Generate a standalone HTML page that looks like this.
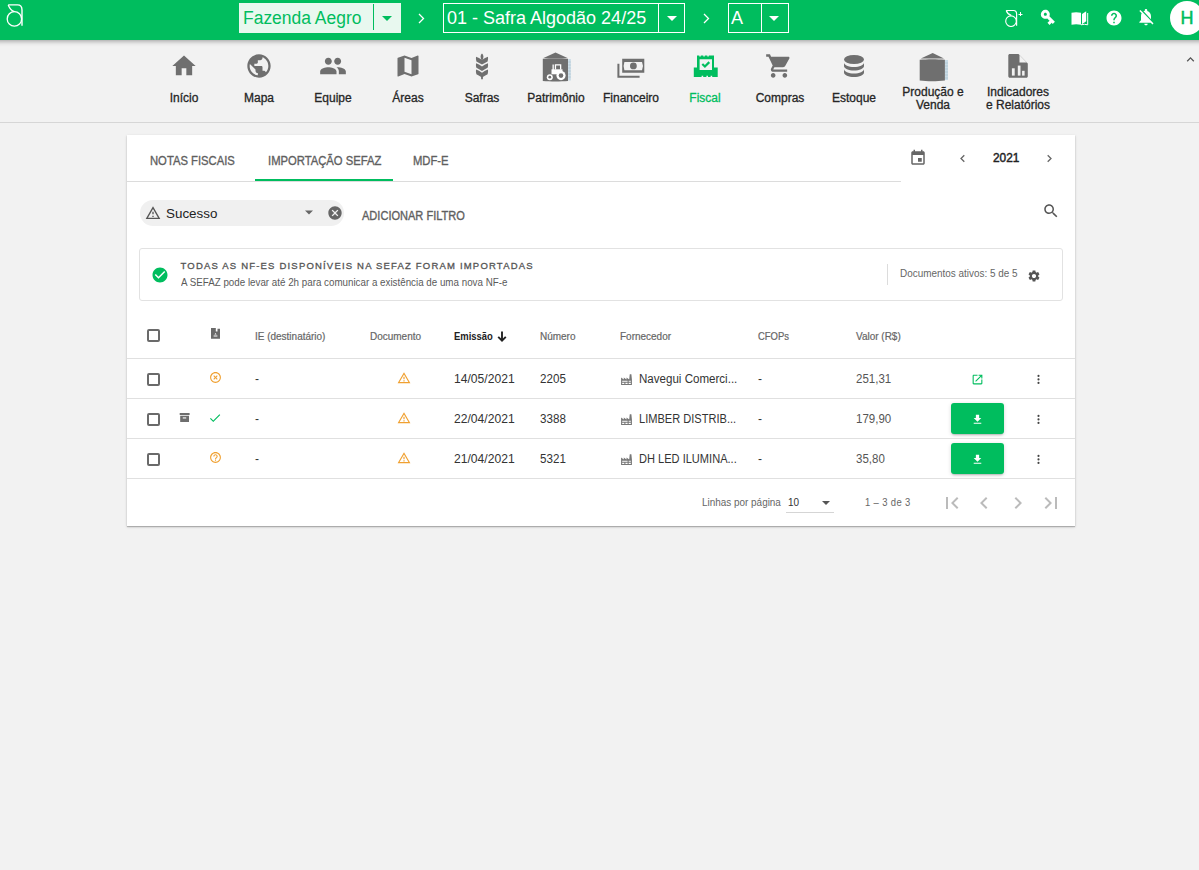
<!DOCTYPE html>
<html><head><meta charset="utf-8">
<style>
*{box-sizing:border-box;margin:0;padding:0}
html,body{width:1199px;height:870px;overflow:hidden;background:#f2f2f2;font-family:"Liberation Sans",sans-serif;color:#333}
.abs{position:absolute}
svg{display:block}
#top{position:absolute;left:0;top:0;width:1199px;height:40px;background:#00bd5e;z-index:5}
#topsh{position:absolute;left:-20px;top:0;width:1240px;height:40px;box-shadow:0 1px 5px rgba(0,0,0,.38);z-index:4}
#nav{position:absolute;left:0;top:40px;width:1199px;height:83px;border-bottom:1px solid #d6d6d6}
.ni{position:absolute;text-align:center;font-size:12px;color:#262626;-webkit-text-stroke:0.3px #262626;white-space:nowrap}
#card{position:absolute;left:127px;top:135px;width:948px;height:391px;background:#fff;box-shadow:0 1px 1px rgba(0,0,0,.22),0 1px 3px rgba(0,0,0,.14)}
.t{position:absolute;white-space:nowrap;line-height:1}
</style></head><body>
<div id="topsh"></div><div id="top">
<svg class="abs" style="left:0;top:0" width="30" height="40" viewBox="0 0 30 40">
<circle cx="14.4" cy="18.9" r="7.2" fill="none" stroke="#fff" stroke-width="1.3"/>
<path d="M8.2 4.9 H17.5 C20.5 4.9 22 7 22 10 V25.8" fill="none" stroke="#fff" stroke-width="1.4"/>
<path d="M8.2 4.9 C9.5 8 11.5 10.8 14.4 11.6" fill="none" stroke="#fff" stroke-width="1.3"/>
</svg>
<div class="abs" style="left:239px;top:3px;width:162px;height:30px;background:#e8f8ef"></div>
<div class="t" style="left:242.5px;top:6px;font-size:18px;color:#00bd5e;line-height:24px;transform:scaleX(0.97);transform-origin:0 0">Fazenda Aegro</div>
<div class="abs" style="left:373px;top:4px;width:1px;height:26px;background:#00bd5e"></div>
<svg class="abs" style="left:375px;top:6px" width="24" height="24" viewBox="0 0 24 24"><path d="M7 10l5 5 5-5z" fill="#00bd5e"/></svg>
<svg class="abs" style="left:412px;top:6px" width="18" height="24" viewBox="0 0 18 24"><path d="M7 8l4.5 4.5L7 17" fill="none" stroke="#fff" stroke-width="1.3"/></svg>
<div class="abs" style="left:443px;top:3px;width:242px;height:30px;border:1px solid #fff"></div>
<div class="t" style="left:447px;top:6px;font-size:18px;color:#fff;line-height:24px">01 - Safra Algodão 24/25</div>
<div class="abs" style="left:658px;top:4px;width:1px;height:28px;background:#fff"></div>
<svg class="abs" style="left:660px;top:6px" width="24" height="24" viewBox="0 0 24 24"><path d="M7 10l5 5 5-5z" fill="#fff"/></svg>
<svg class="abs" style="left:697px;top:6px" width="18" height="24" viewBox="0 0 18 24"><path d="M7 8l4.5 4.5L7 17" fill="none" stroke="#fff" stroke-width="1.3"/></svg>
<div class="abs" style="left:728px;top:3px;width:61px;height:30px;border:1px solid #fff"></div>
<div class="t" style="left:731px;top:6px;font-size:18px;color:#fff;line-height:24px">A</div>
<div class="abs" style="left:761px;top:4px;width:1px;height:28px;background:#fff"></div>
<svg class="abs" style="left:762px;top:6px" width="24" height="24" viewBox="0 0 24 24"><path d="M7 10l5 5 5-5z" fill="#fff"/></svg>
<!-- right icons -->
<svg class="abs" style="left:1003px;top:9px" width="22" height="18" viewBox="0 0 22 18">
<circle cx="8" cy="12.2" r="5.3" fill="none" stroke="#fff" stroke-width="1.1"/>
<path d="M3.2 1.5 H10.5 C12.5 1.5 13.6 3 13.6 5 V16.8" fill="none" stroke="#fff" stroke-width="1.2"/>
<path d="M3.2 1.5 C4 3.6 5.5 5.6 8.2 6.4" fill="none" stroke="#fff" stroke-width="1.2"/>
<path d="M17.5 3 v4 M15.5 5.5 h4" stroke="#fff" stroke-width="1"/>
</svg>
<svg class="abs" style="left:1038.5px;top:8px" width="18" height="18" viewBox="0 0 24 24"><g transform="rotate(45 12 12)"><path d="M7 14c-1.1 0-2-.9-2-2s.9-2 2-2 2 .9 2 2-.9 2-2 2zm5.65-4C11.83 7.67 9.61 6 7 6c-3.31 0-6 2.69-6 6s2.69 6 6 6c2.61 0 4.83-1.67 5.65-4H17v4h4v-4h2v-4H12.65z" fill="#fff"/></g></svg>
<svg class="abs" style="left:1070px;top:10px" width="20" height="16" viewBox="0 0 20 16"><path d="M1.5 2.8 Q6 1.6 11 2.8 V14.8 Q6 13.6 1.5 14.8Z" fill="#fff"/><path d="M11 14.8 Q14.5 13.8 17.7 14.8 V3" fill="none" stroke="#fff" stroke-width="1"/><path d="M12 14.2 V4 L16.2 1.2 V11.2Z" fill="#fff"/></svg>
<svg class="abs" style="left:1104.5px;top:8.8px" width="18" height="18" viewBox="0 0 24 24"><path d="M12 2C6.48 2 2 6.48 2 12s4.480 10 10 10 10-4.48 10-10S17.52 2 12 2zm1 17h-2v-2h2v2zm2.07-7.75l-.9.92C13.45 12.9 13 13.5 13 15h-2v-.5c0-1.1.45-2.1 1.17-2.83l1.24-1.26c.37-.36.59-.86.59-1.41 0-1.1-.9-2-2-2s-2 .9-2 2H8c0-2.210 1.79-4 4-4s4 1.79 4 4c0 .88-.36 1.68-.93 2.25z" fill="#fff"/></svg>
<svg class="abs" style="left:1136px;top:7px" width="20" height="20" viewBox="0 0 24 24"><path d="M20 18.69L7.84 6.14 5.27 3.49 4 4.76l2.8 2.8v.01c-.52.99-.8 2.16-.8 3.42v5l-2 2v1h13.73l2 2L21 19.72l-1-1.03zM12 22c1.11 0 2-.89 2-2h-4c0 1.11.89 2 2 2zm6-7.32V11c0-3.08-1.64-5.64-4.5-6.32V4c0-.83-.67-1.5-1.5-1.5s-1.5.67-1.5 1.5v.68c-.15.03-.29.08-.42.12-.1.03-.2.07-.3.11h-.01c-.01 0-.01 0-.02.01-.23.09-.46.2-.68.31 0 0-.01 0-.01.01L18 14.68z" fill="#fff"/></svg>
<div class="abs" style="left:1170px;top:1px;width:34px;height:34px;border-radius:50%;background:#fff"></div>
<div class="t" style="left:1180.5px;top:6.5px;font-size:18px;color:#00bd5e;line-height:22px;-webkit-text-stroke:0.5px #00bd5e">H</div>
</div>
<div id="nav"><div class="ni" style="left:124px;width:120px;top:52px;line-height:13px;">Início</div><svg class="abs" style="left:170px;top:11.5px" width="28" height="28" viewBox="0 0 24 24"><path d="M10 20v-6h4v6h5v-8h3L12 3 2 12h3v8z" fill="#6f6f6f"/></svg><div class="ni" style="left:199px;width:120px;top:52px;line-height:13px;">Mapa</div><svg class="abs" style="left:245px;top:12px" width="28" height="28" viewBox="0 0 24 24"><path d="M12 2C6.48 2 2 6.48 2 12s4.48 10 10 10 10-4.48 10-10S17.52 2 12 2zm-1 17.93c-3.95-.49-7-3.85-7-7.93 0-.62.08-1.21.21-1.79L9 15v1c0 1.1.9 2 2 2v1.93zm6.9-2.54c-.26-.81-1-1.39-1.9-1.39h-1v-3c0-.55-.45-1-1-1H8v-2h2c.55 0 1-.45 1-1V7h2c1.1 0 2-.9 2-2v-.41c2.93 1.19 5 4.06 5 7.41 0 2.08-.8 3.97-2.1 5.39z" fill="#6f6f6f"/></svg><div class="ni" style="left:273px;width:120px;top:52px;line-height:13px;">Equipe</div><svg class="abs" style="left:319px;top:11.5px" width="28" height="28" viewBox="0 0 24 24"><path d="M16 11c1.66 0 2.99-1.34 2.99-3S17.66 5 16 5c-1.66 0-3 1.34-3 3s1.34 3 3 3zm-8 0c1.66 0 2.99-1.34 2.99-3S9.66 5 8 5C6.34 5 5 6.34 5 8s1.34 3 3 3zm0 2c-2.33 0-7 1.17-7 3.5V19h14v-2.5c0-2.33-4.67-3.5-7-3.5zm8 0c-.29 0-.62.02-.97.05 1.16.84 1.97 1.97 1.97 3.45V19h6v-2.5c0-2.33-4.67-3.5-7-3.5z" fill="#6f6f6f"/></svg><div class="ni" style="left:348px;width:120px;top:52px;line-height:13px;">Áreas</div><svg class="abs" style="left:393.7px;top:11.8px" width="28" height="28" viewBox="0 0 24 24"><path d="M20.5 3l-.16.03L15 5.1 9 3 3.36 4.9c-.21.07-.36.25-.36.48V20.5c0 .28.22.5.5.5l.16-.03L9 18.9l6 2.1 5.64-1.9c.21-.07.36-.25.36-.48V3.5c0-.28-.22-.5-.5-.5zM15 19l-6-2.11V5l6 2.11V19z" fill="#6f6f6f"/></svg><div class="ni" style="left:422px;width:120px;top:52px;line-height:13px;">Safras</div><svg class="abs" style="left:475px;top:13px" width="14" height="27" viewBox="0 0 14 27"><path d="M7 0.4 C8.8 2 9 4.5 7 8 C5 4.5 5.2 2 7 0.4Z" fill="#6f6f6f"/><path d="M1 3.8 Q4 4.6 7 7.0 Q10 4.6 13 3.8 Q13.3 6.8 12.6 8.399999999999999 Q10 10.0 7 11.6 Q4 10.0 1.4 8.399999999999999 Q0.7 6.8 1 3.8Z" fill="#6f6f6f"/><path d="M1 10.2 Q4 11.0 7 13.399999999999999 Q10 11.0 13 10.2 Q13.3 13.2 12.6 14.799999999999999 Q10 16.4 7 18.0 Q4 16.4 1.4 14.799999999999999 Q0.7 13.2 1 10.2Z" fill="#6f6f6f"/><path d="M1 16.6 Q4 17.400000000000002 7 19.8 Q10 17.400000000000002 13 16.6 Q13.3 19.6 12.6 21.200000000000003 Q10 22.8 7 24.400000000000002 Q4 22.8 1.4 21.200000000000003 Q0.7 19.6 1 16.6Z" fill="#6f6f6f"/><path d="M7 22 V26.2" stroke="#6f6f6f" stroke-width="1.8"/></svg><div class="ni" style="left:496px;width:120px;top:52px;line-height:13px;">Patrimônio</div><svg class="abs" style="left:542px;top:12px" width="30" height="30" viewBox="0 0 30 30"><path d="M1.5 6 L13.5 0.5 L25.5 6Z" fill="#6f6f6f"/><path d="M0.8 6.8 C8 6.2 19 6.2 26 6.8 V29 C19 29.6 8 29.6 0.8 29Z" fill="#6f6f6f"/><rect x="26.2" y="7" width="2.6" height="21.5" fill="#c9dbe6"/><g stroke="#9fb4c0" stroke-width="0.5"><path d="M26.2 10h2.6M26.2 13h2.6M26.2 16h2.6M26.2 19h2.6M26.2 22h2.6M26.2 25h2.6"/></g>
<g fill="#fff"><rect x="10.5" y="12.5" width="1.3" height="5.5"/><path d="M12.8 12.3 H19.3 V17.5 H18 V13.6 H14.1 V17.5 H12.8Z"/><rect x="9.5" y="17.3" width="11" height="5"/><circle cx="19" cy="23.6" r="4.6"/><circle cx="7.8" cy="25.2" r="3"/></g>
<g fill="#6f6f6f"><circle cx="19" cy="23.6" r="2.3"/><circle cx="7.8" cy="25.2" r="1.4"/></g></svg><div class="ni" style="left:571px;width:120px;top:52px;line-height:13px;">Financeiro</div><svg class="abs" style="left:616px;top:17px" width="30" height="22" viewBox="0 0 30 22"><path d="M6.2 1.8 H28.3 V15.7 H6.2Z M8.4 4.9 H26 L27 9 L26 13.2 H8.4 L7.6 9Z" fill="#6f6f6f" fill-rule="evenodd"/><path d="M2.4 6.7 V19.8 H23.6" fill="none" stroke="#6f6f6f" stroke-width="2"/><circle cx="17.4" cy="8.9" r="3.4" fill="#6f6f6f"/></svg><div class="ni" style="left:645px;width:120px;top:52px;line-height:13px;color:#00bd5e;-webkit-text-stroke:0.3px #00bd5e;">Fiscal</div><svg class="abs" style="left:693px;top:14px" width="26" height="24" viewBox="0 0 26 24"><path d="M4 1.5 H6.3 V2.6 H7.8 V1.5 H10.3 V2.6 H11.8 V1.5 H14.3 V2.6 H15.8 V1.5 H21 V13.5 H24.7 V23 H19.2 V21.8 H17.6 V23 H15 V21.8 H13.4 V23 H10.2 V21.8 H8.6 V23 H0.8 V13.5 H4Z M6.6 5.2 V16 H19 V5.2Z" fill="#00bd5e" fill-rule="evenodd"/><path d="M9.3 10 L11.9 12.5 L16.3 8.1" fill="none" stroke="#00bd5e" stroke-width="2.2"/></svg><div class="ni" style="left:720px;width:120px;top:52px;line-height:13px;">Compras</div><svg class="abs" style="left:765px;top:12px" width="28" height="28" viewBox="0 0 24 24"><path d="M7 18c-1.1 0-1.99.9-1.99 2S5.9 22 7 22s2-.9 2-2-.9-2-2-2zM1 2v2h2l3.6 7.59-1.35 2.45c-.16.28-.25.61-.25.96 0 1.1.9 2 2 2h12v-2H7.42c-.14 0-.25-.11-.25-.25l.03-.12.9-1.63h7.45c.75 0 1.41-.41 1.750-1.03l3.58-6.49c.08-.14.12-.31.12-.48 0-.55-.45-1-1-1H5.21l-.94-2H1zm16 16c-1.1 0-1.99.9-1.99 2s.89 2 1.99 2 2-.9 2-2-.9-2-2-2z" fill="#6f6f6f"/></svg><div class="ni" style="left:794px;width:120px;top:52px;line-height:13px;">Estoque</div><svg class="abs" style="left:843px;top:14px" width="22" height="24" viewBox="0 0 22 24"><ellipse cx="11" cy="5.5" rx="10" ry="4.5" fill="#6f6f6f"/><path d="M1 8.5 C1 11 5.5 13 11 13 C16.5 13 21 11 21 8.5 V12 C21 14.5 16.5 16.5 11 16.5 C5.5 16.5 1 14.5 1 12Z" fill="#6f6f6f"/><path d="M1 15 C1 17.5 5.5 19.5 11 19.5 C16.5 19.5 21 17.5 21 15 V18.5 C21 21 16.5 23 11 23 C5.5 23 1 21 1 18.5Z" fill="#6f6f6f"/></svg><div class="ni" style="left:873px;width:120px;top:46px;line-height:13px;">Produção e<br>Venda</div><svg class="abs" style="left:919px;top:12px" width="30" height="30" viewBox="0 0 30 30"><path d="M1.8 6.6 L13.7 0.9 L25 6.6Z" fill="#6f6f6f"/><path d="M0.7 7.8 C8 7 18 7 25.9 7.8 V28.5 C18 29.6 8 29.6 0.7 28.5Z" fill="#6f6f6f"/><rect x="26" y="8" width="3" height="20" fill="#c9dbe6"/><g stroke="#9fb4c0" stroke-width="0.5"><path d="M26 11h3M26 14h3M26 17h3M26 20h3M26 23h3M26 26h3"/></g></svg><div class="ni" style="left:958px;width:120px;top:46px;line-height:13px;">Indicadores<br>e Relatórios</div><svg class="abs" style="left:1005px;top:13px" width="26" height="26" viewBox="0 0 26 26"><path d="M4.8 1 H13.5 L22.8 10.5 V23.3 C22.8 24.1 22.1 24.8 21.3 24.8 H4.8 C4 24.8 3.3 24.1 3.3 23.3 V2.5 C3.3 1.7 4 1 4.8 1Z" fill="#6f6f6f"/><path d="M14.5 1.9 V9.6 H21.8Z" fill="#f2f2f2"/><rect x="6.9" y="15.3" width="2.8" height="7.3" fill="#f2f2f2"/><rect x="12.8" y="12.6" width="2.7" height="10" fill="#f2f2f2"/><rect x="17.1" y="17.8" width="2.5" height="4.8" fill="#f2f2f2"/></svg><svg class="abs" style="left:1186px;top:16px" width="9" height="7" viewBox="0 0 9 7"><path d="M1.2 5.2 L4.5 1.9 L7.8 5.2" fill="none" stroke="#555" stroke-width="1.3"/></svg></div><div id="card"><div class="t" style="left:22.50px;top:20.42px;font-size:12.5px;color:#5f5f5f;font-weight:normal;transform:scaleX(0.9);transform-origin:0 0;-webkit-text-stroke:0.35px #5f5f5f">NOTAS FISCAIS</div><div class="t" style="left:140.50px;top:20.42px;font-size:12.5px;color:#5f5f5f;font-weight:normal;transform:scaleX(0.9);transform-origin:0 0;-webkit-text-stroke:0.35px #5f5f5f">IMPORTAÇÃO SEFAZ</div><div class="t" style="left:286.00px;top:20.42px;font-size:12.5px;color:#5f5f5f;font-weight:normal;transform:scaleX(0.9);transform-origin:0 0;-webkit-text-stroke:0.35px #5f5f5f">MDF-E</div><div class="abs" style="left:128.00px;top:44.00px;width:138px;height:2px;background:#00bd5e"></div><div class="abs" style="left:0.00px;top:46.00px;width:774px;height:1px;background:#dcdcdc"></div><svg class="abs" style="left:781.50px;top:14.25px" width="18" height="18" viewBox="0 0 24 24"><path d="M17 12h-5v5h5v-5zM16 1v2H8V1H6v2H5c-1.11 0-1.99.9-1.99 2L3 19c0 1.1.89 2 2 2h14c1.1 0 2-.9 2-2V5c0-1.1-.9-2-2-2h-1V1h-2zm3 18H5V8h14v11z" fill="#666"/></svg><svg class="abs" style="left:832.00px;top:19.00px" width="8" height="9" viewBox="0 0 8 9"><path d="M5.3 1.2 L2 4.5 L5.3 7.8" fill="none" stroke="#666" stroke-width="1.3"/></svg><div class="t" style="left:866.00px;top:16.72px;font-size:12.5px;color:#222;font-weight:normal;transform:scaleX(0.95);transform-origin:0 0;-webkit-text-stroke:0.45px #222">2021</div><svg class="abs" style="left:918.00px;top:19.00px" width="8" height="9" viewBox="0 0 8 9"><path d="M2.7 1.2 L6 4.5 L2.7 7.8" fill="none" stroke="#666" stroke-width="1.3"/></svg><div class="abs" style="left:13.00px;top:65.00px;width:204px;height:26px;background:#f0f0f0;border-radius:13px"></div><svg class="abs" style="left:18.00px;top:70.00px" width="16" height="16" viewBox="0 0 24 24"><path d="M12 5.99L19.53 19H4.47L12 5.99M12 2L1 21h22L12 2zm1 14h-2v2h2v-2zm0-6h-2v4h2v-4z" fill="#555"/></svg><div class="t" style="left:38.50px;top:71.50px;font-size:13px;color:#222;font-weight:normal;transform:scaleX(1.03);transform-origin:0 0;">Sucesso</div><svg class="abs" style="left:176.00px;top:71.00px" width="12" height="12" viewBox="0 0 12 12"><path d="M2 4.5 L10 4.5 L6 8.5Z" fill="#666"/></svg><svg class="abs" style="left:200.30px;top:69.70px" width="16" height="16" viewBox="0 0 24 24"><path d="M12 2C6.47 2 2 6.47 2 12s4.47 10 10 10 10-4.47 10-10S17.53 2 12 2zm5 13.59L15.59 17 12 13.41 8.41 17 7 15.590 10.59 12 7 8.41 8.41 7 12 10.59 15.59 7 17 8.41 13.41 12 17 15.59z" fill="#666"/></svg><div class="t" style="left:235.00px;top:75.14px;font-size:12px;color:#5f5f5f;font-weight:normal;transform:scaleX(0.92);transform-origin:0 0;-webkit-text-stroke:0.35px #5f5f5f">ADICIONAR FILTRO</div><svg class="abs" style="left:915.00px;top:66.75px" width="18" height="18" viewBox="0 0 24 24"><path d="M15.5 14h-.79l-.28-.27C15.41 12.59 16 11.11 16 9.5 16 5.91 13.09 3 9.5 3S3 5.91 3 9.5 5.91 16 9.5 16c1.61 0 3.09-.59 4.23-1.57l.27.28v.79l5 4.99L20.49 19l-4.99-5zm-6 0C7.01 14 5 11.99 5 9.5S7.01 5 9.5 5 14 7.01 14 9.5 11.99 14 9.5 14z" fill="#555"/></svg><div class="abs" style="left:12.00px;top:113.00px;width:924px;height:53px;border:1px solid #e2e2e2;border-radius:3px"></div><svg class="abs" style="left:23.50px;top:130.50px" width="18" height="18" viewBox="0 0 24 24"><path d="M12 2C6.48 2 2 6.48 2 12s4.48 10 10 10 10-4.48 10-10S17.52 2 12 2zm-2 15l-5-5 1.41-1.41L10 14.17l7.59-7.59L19 8l-9 9z" fill="#00bd5e"/></svg><div class="t" style="left:53.50px;top:125.76px;font-size:9.5px;color:#555;font-weight:normal;letter-spacing:1.19px;-webkit-text-stroke:0.3px #555">TODAS AS NF-ES DISPONÍVEIS NA SEFAZ FORAM IMPORTADAS</div><div class="t" style="left:53.50px;top:142.11px;font-size:10.5px;color:#5a5a5a;font-weight:normal;transform:scaleX(0.932);transform-origin:0 0;">A SEFAZ pode levar até 2h para comunicar a existência de uma nova NF-e</div><div class="abs" style="left:760.00px;top:129.00px;width:1px;height:21px;background:#dcdcdc"></div><div class="t" style="left:772.50px;top:133.57px;font-size:10.2px;color:#666;font-weight:normal;transform:scaleX(0.975);transform-origin:0 0;">Documentos ativos: 5 de 5</div><svg class="abs" style="left:899.50px;top:133.80px" width="14" height="14" viewBox="0 0 24 24"><path d="M19.14 12.94c.04-.3.06-.61.06-.94 0-.32-.02-.64-.07-.94l2.03-1.58c.18-.14.23-.41.12-.61l-1.92-3.32c-.12-.22-.37-.29-.59-.22l-2.39.96c-.5-.38-1.03-.7-1.62-.94l-.36-2.54c-.04-.24-.24-.41-.48-.41h-3.84c-.24 0-.43.17-.47.41l-.36 2.54c-.59.24-1.13.57-1.62.94l-2.39-.96c-.22-.08-.47 0-.59.22L2.74 8.87c-.12.21-.08.47.12.61l2.03 1.58c-.05.3-.09.63-.09.94s.02.64.07.94l-2.03 1.58c-.18.14-.23.41-.12.61l1.92 3.32c.12.22.37.29.59.22l2.39-.96c.5.38 1.03.7 1.62.94l.36 2.54c.05.24.24.41.48.41h3.84c.24 0 .44-.17.47-.41l.36-2.54c.59-.24 1.13-.56 1.62-.94l2.39.96c.22.08.47 0 .59-.22l1.92-3.32c.12-.22.07-.47-.12-.61l-2.01-1.58zM12 15.6c-1.98 0-3.6-1.62-3.6-3.6s1.62-3.6 3.6-3.6 3.6 1.62 3.6 3.6-1.62 3.6-3.6 3.6z" fill="#555"/></svg><div class="abs" style="left:20.00px;top:194.00px;width:13px;height:13px;border:2px solid #6a6a6a;border-radius:2px"></div><svg class="abs" style="left:84.00px;top:193.00px" width="9" height="11" viewBox="0 0 9 11"><path d="M0 0 H4.8 V3.4 H6.5 V0.8 H9 V10.8 H0Z" fill="#6a6a6a"/><path d="M4.5 5 L5.6 6.6 H3.4Z M2.6 7.4 H6.4 V8.6 H2.6Z" fill="#fff"/></svg><div class="t" style="left:127.50px;top:195.61px;font-size:10.5px;color:#666;font-weight:normal;transform:scaleX(0.95);transform-origin:0 0;-webkit-text-stroke:0.2px #666">IE (destinatário)</div><div class="t" style="left:242.50px;top:195.61px;font-size:10.5px;color:#666;font-weight:normal;transform:scaleX(0.95);transform-origin:0 0;-webkit-text-stroke:0.2px #666">Documento</div><div class="t" style="left:326.50px;top:195.61px;font-size:10.5px;color:#222;font-weight:bold;transform:scaleX(0.9);transform-origin:0 0;">Emissão</div><svg class="abs" style="left:370.00px;top:196.00px" width="10" height="11" viewBox="0 0 10 11"><path d="M5 0.5 V9.5" stroke="#222" stroke-width="1.9"/><path d="M1.2 5.8 L5 9.6 L8.8 5.8" fill="none" stroke="#222" stroke-width="1.9"/></svg><div class="t" style="left:413.00px;top:195.61px;font-size:10.5px;color:#666;font-weight:normal;transform:scaleX(0.95);transform-origin:0 0;-webkit-text-stroke:0.2px #666">Número</div><div class="t" style="left:493.00px;top:195.61px;font-size:10.5px;color:#666;font-weight:normal;transform:scaleX(0.95);transform-origin:0 0;-webkit-text-stroke:0.2px #666">Fornecedor</div><div class="t" style="left:630.50px;top:195.61px;font-size:10.5px;color:#666;font-weight:normal;transform:scaleX(0.9);transform-origin:0 0;-webkit-text-stroke:0.2px #666">CFOPs</div><div class="t" style="left:729.00px;top:195.61px;font-size:10.5px;color:#666;font-weight:normal;transform:scaleX(0.95);transform-origin:0 0;-webkit-text-stroke:0.2px #666">Valor (R$)</div><div class="abs" style="left:0.00px;top:223.00px;width:948px;height:1px;background:#e0e0e0"></div><div class="abs" style="left:20.00px;top:238.00px;width:13px;height:13px;border:2px solid #6a6a6a;border-radius:2px"></div><svg class="abs" style="left:82.00px;top:236.00px" width="13" height="13" viewBox="0 0 24 24"><path d="M14.59 8L12 10.59 9.41 8 8 9.41 10.59 12 8 14.59 9.41 16 12 13.41 14.59 16 16 14.59 13.41 12 16 9.41 14.59 8zM12 2C6.47 2 2 6.47 2 12s4.47 10 10 10 10-4.47 10-10S17.53 2 12 2zm0 18c-4.41 0-8-3.590-8-8s3.59-8 8-8 8 3.59 8 8-3.59 8-8 8z" fill="#f0a030"/></svg><div class="t" style="left:128.00px;top:238.09px;font-size:12px;color:#333;font-weight:normal;">-</div><svg class="abs" style="left:269.50px;top:236.00px" width="14" height="14" viewBox="0 0 24 24"><path d="M12 5.99L19.53 19H4.47L12 5.99M12 2L1 21h22L12 2zm1 14h-2v2h2v-2zm0-6h-2v4h2v-4z" fill="#f0a030"/></svg><div class="t" style="left:326.50px;top:237.67px;font-size:12.5px;color:#333;font-weight:normal;transform:scaleX(0.97);transform-origin:0 0;">14/05/2021</div><div class="t" style="left:413.00px;top:237.67px;font-size:12.5px;color:#333;font-weight:normal;transform:scaleX(0.93);transform-origin:0 0;">2205</div><svg class="abs" style="left:493.00px;top:237.50px" width="13" height="12" viewBox="0 0 24 22"><path d="M4,18V20H8V18H4M4,14V16H14V14H4M10,18V20H14V18H10M16,14V16H20V14H16M16,18V20H20V18H16M2,22V8L7,12V8L12,12V8L17,12L18,2H21L22,12V22H2Z" fill="#777"/></svg><div class="t" style="left:512.00px;top:237.67px;font-size:12.5px;color:#333;font-weight:normal;transform:scaleX(0.925);transform-origin:0 0;">Navegui Comerci...</div><div class="t" style="left:631.00px;top:238.09px;font-size:12px;color:#333;font-weight:normal;">-</div><div class="t" style="left:729.00px;top:237.67px;font-size:12.5px;color:#555;font-weight:normal;transform:scaleX(0.92);transform-origin:0 0;">251,31</div><svg class="abs" style="left:844.00px;top:238.00px" width="13" height="13" viewBox="0 0 24 24"><path d="M19 19H5V5h7V3H5c-1.11 0-2 .9-2 2v14c0 1.1.89 2 2 2h14c1.1 0 2-.9 2-2v-7h-2v7zM14 3v2h3.59l-9.83 9.83 1.41 1.41L19 6.41V10h2V3h-7z" fill="#00bd5e"/></svg><svg class="abs" style="left:909.00px;top:239.00px" width="5" height="11" viewBox="0 0 5 11"><circle cx="2.5" cy="1.9" r="1.05" fill="#444"/><circle cx="2.5" cy="5.4" r="1.05" fill="#444"/><circle cx="2.5" cy="8.9" r="1.05" fill="#444"/></svg><div class="abs" style="left:0.00px;top:263.00px;width:948px;height:1px;background:#e0e0e0"></div><div class="abs" style="left:20.00px;top:278.00px;width:13px;height:13px;border:2px solid #6a6a6a;border-radius:2px"></div><svg class="abs" style="left:52.00px;top:277.00px" width="11" height="10" viewBox="0 0 11 10"><path d="M0.7 1 H10.6 V3 H0.7Z M1.2 3.8 H10 V10.4 H1.2Z" fill="#6e6e6e"/><rect x="3.8" y="5.4" width="3.4" height="1.1" fill="#fff"/></svg><svg class="abs" style="left:81.00px;top:276.00px" width="14" height="14" viewBox="0 0 24 24"><path d="M9 16.17L4.83 12l-1.42 1.41L9 19 21 7l-1.41-1.41z" fill="#00bd5e"/></svg><div class="t" style="left:128.00px;top:278.09px;font-size:12px;color:#333;font-weight:normal;">-</div><svg class="abs" style="left:269.50px;top:276.00px" width="14" height="14" viewBox="0 0 24 24"><path d="M12 5.99L19.53 19H4.47L12 5.99M12 2L1 21h22L12 2zm1 14h-2v2h2v-2zm0-6h-2v4h2v-4z" fill="#f0a030"/></svg><div class="t" style="left:326.50px;top:277.67px;font-size:12.5px;color:#333;font-weight:normal;transform:scaleX(0.97);transform-origin:0 0;">22/04/2021</div><div class="t" style="left:413.00px;top:277.67px;font-size:12.5px;color:#333;font-weight:normal;transform:scaleX(0.93);transform-origin:0 0;">3388</div><svg class="abs" style="left:493.00px;top:277.50px" width="13" height="12" viewBox="0 0 24 22"><path d="M4,18V20H8V18H4M4,14V16H14V14H4M10,18V20H14V18H10M16,14V16H20V14H16M16,18V20H20V18H16M2,22V8L7,12V8L12,12V8L17,12L18,2H21L22,12V22H2Z" fill="#777"/></svg><div class="t" style="left:512.00px;top:277.67px;font-size:12.5px;color:#333;font-weight:normal;transform:scaleX(0.885);transform-origin:0 0;">LIMBER DISTRIB...</div><div class="t" style="left:631.00px;top:278.09px;font-size:12px;color:#333;font-weight:normal;">-</div><div class="t" style="left:729.00px;top:277.67px;font-size:12.5px;color:#555;font-weight:normal;transform:scaleX(0.92);transform-origin:0 0;">179,90</div><div class="abs" style="left:824.00px;top:268.00px;width:53px;height:31px;background:#00bd5e;border-radius:3px;box-shadow:0 2px 2px -1px rgba(0,0,0,.22),0 1px 4px rgba(0,0,0,.14)"></div><svg class="abs" style="left:843.50px;top:278.00px" width="13" height="13" viewBox="0 0 24 24"><path d="M19 9h-4V3H9v6H5l7 7 7-7zM5 18v2h14v-2H5z" fill="#fff"/></svg><svg class="abs" style="left:909.00px;top:279.00px" width="5" height="11" viewBox="0 0 5 11"><circle cx="2.5" cy="1.9" r="1.05" fill="#444"/><circle cx="2.5" cy="5.4" r="1.05" fill="#444"/><circle cx="2.5" cy="8.9" r="1.05" fill="#444"/></svg><div class="abs" style="left:0.00px;top:303.00px;width:948px;height:1px;background:#e0e0e0"></div><div class="abs" style="left:20.00px;top:318.00px;width:13px;height:13px;border:2px solid #6a6a6a;border-radius:2px"></div><svg class="abs" style="left:82.00px;top:316.00px" width="13" height="13" viewBox="0 0 24 24"><path d="M11 18h2v-2h-2v2zm1-16C6.48 2 2 6.48 2 12s4.48 10 10 10 10-4.48 10-10S17.52 2 12 2zm0 18c-4.41 0-8-3.59-8-8s3.59-8 8-8 8 3.59 8 8-3.59 8-8 8zm0-14c-2.21 0-4 1.79-4 4h2c0-1.1.9-2 2-2s2 .9 2 2c0 2-3 1.75-3 5h2c0-2.25 3-2.5 3-5 0-2.21-1.79-4-4-4z" fill="#f0a030"/></svg><div class="t" style="left:128.00px;top:318.09px;font-size:12px;color:#333;font-weight:normal;">-</div><svg class="abs" style="left:269.50px;top:316.00px" width="14" height="14" viewBox="0 0 24 24"><path d="M12 5.99L19.53 19H4.47L12 5.99M12 2L1 21h22L12 2zm1 14h-2v2h2v-2zm0-6h-2v4h2v-4z" fill="#f0a030"/></svg><div class="t" style="left:326.50px;top:317.67px;font-size:12.5px;color:#333;font-weight:normal;transform:scaleX(0.97);transform-origin:0 0;">21/04/2021</div><div class="t" style="left:413.00px;top:317.67px;font-size:12.5px;color:#333;font-weight:normal;transform:scaleX(0.93);transform-origin:0 0;">5321</div><svg class="abs" style="left:493.00px;top:317.50px" width="13" height="12" viewBox="0 0 24 22"><path d="M4,18V20H8V18H4M4,14V16H14V14H4M10,18V20H14V18H10M16,14V16H20V14H16M16,18V20H20V18H16M2,22V8L7,12V8L12,12V8L17,12L18,2H21L22,12V22H2Z" fill="#777"/></svg><div class="t" style="left:512.00px;top:317.67px;font-size:12.5px;color:#333;font-weight:normal;transform:scaleX(0.885);transform-origin:0 0;">DH LED ILUMINA...</div><div class="t" style="left:631.00px;top:318.09px;font-size:12px;color:#333;font-weight:normal;">-</div><div class="t" style="left:729.00px;top:317.67px;font-size:12.5px;color:#555;font-weight:normal;transform:scaleX(0.92);transform-origin:0 0;">35,80</div><div class="abs" style="left:824.00px;top:308.00px;width:53px;height:31px;background:#00bd5e;border-radius:3px;box-shadow:0 2px 2px -1px rgba(0,0,0,.22),0 1px 4px rgba(0,0,0,.14)"></div><svg class="abs" style="left:843.50px;top:318.00px" width="13" height="13" viewBox="0 0 24 24"><path d="M19 9h-4V3H9v6H5l7 7 7-7zM5 18v2h14v-2H5z" fill="#fff"/></svg><svg class="abs" style="left:909.00px;top:319.00px" width="5" height="11" viewBox="0 0 5 11"><circle cx="2.5" cy="1.9" r="1.05" fill="#444"/><circle cx="2.5" cy="5.4" r="1.05" fill="#444"/><circle cx="2.5" cy="8.9" r="1.05" fill="#444"/></svg><div class="abs" style="left:0.00px;top:343.00px;width:948px;height:1px;background:#e0e0e0"></div><div class="t" style="left:575.00px;top:362.11px;font-size:10.5px;color:#666;font-weight:normal;transform:scaleX(0.945);transform-origin:0 0;">Linhas por página</div><div class="t" style="left:660.50px;top:362.11px;font-size:10.5px;color:#333;font-weight:normal;transform:scaleX(0.95);transform-origin:0 0;">10</div><svg class="abs" style="left:693.00px;top:362.00px" width="12" height="12" viewBox="0 0 12 12"><path d="M2 4 L10 4 L6 8Z" fill="#555"/></svg><div class="abs" style="left:659.00px;top:377.00px;width:48px;height:1px;background:#d5d5d5"></div><div class="t" style="left:737.50px;top:362.11px;font-size:10.5px;color:#666;font-weight:normal;transform:scaleX(0.9);transform-origin:0 0;letter-spacing:0.4px;">1 – 3 de 3</div><svg class="abs" style="left:813.00px;top:356.00px" width="24" height="24" viewBox="0 0 24 24"><path d="M18.41 16.59L13.82 12l4.59-4.59L17 6l-6 6 6 6zM6 6h2v12H6z" fill="#bbb"/></svg><svg class="abs" style="left:845.00px;top:356.00px" width="24" height="24" viewBox="0 0 24 24"><path d="M15.41 7.41L14 6l-6 6 6 6 1.41-1.41L10.83 12z" fill="#bbb"/></svg><svg class="abs" style="left:879.00px;top:356.00px" width="24" height="24" viewBox="0 0 24 24"><path d="M10 6L8.59 7.41 13.17 12l-4.58 4.59L10 18l6-6z" fill="#bbb"/></svg><svg class="abs" style="left:912.00px;top:356.00px" width="24" height="24" viewBox="0 0 24 24"><path d="M5.59 7.41L10.18 12l-4.59 4.59L7 18l6-6-6-6zM16 6h2v12h-2z" fill="#bbb"/></svg></div></body></html>
